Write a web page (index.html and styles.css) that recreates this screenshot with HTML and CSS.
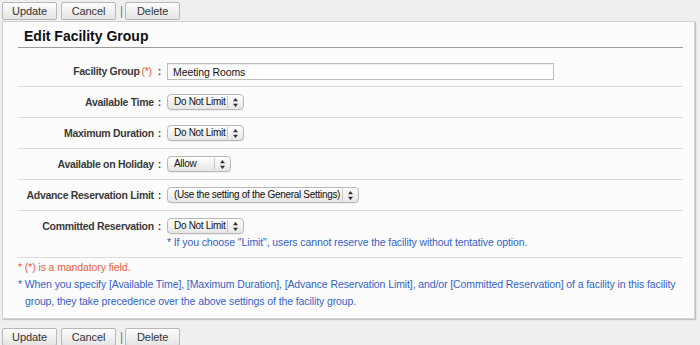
FILE: index.html
```html
<!DOCTYPE html>
<html lang="en">

<head>
    <meta charset="UTF-8">
    <meta name="viewport" content="width=device-width, initial-scale=1.0">
    <title>Edit Facility Group</title>
    <link rel="stylesheet" href="styles.css">
</head>

<body>
    <div class="actions">
        <button class="btn">Update</button>
        <button class="btn">Cancel</button>
        <span class="bar">|</span>
        <button class="btn">Delete</button>
    </div>

    <div class="panel">
        <h2 class="panel-title">Edit Facility Group</h2>

        <div class="form-row first">
            <label class="form-label" for="group">Facility Group<span class="req">(*)</span><span class="colon">:</span></label>
            <div class="form-value">
                <input type="text" id="group" class="text-input" value="Meeting Rooms">
            </div>
        </div>

        <div class="form-row">
            <label class="form-label">Available Time<span class="colon">:</span></label>
            <div class="form-value">
                <span class="sel w-limit">
                    <select><option>Do Not Limit</option></select>
                    <svg class="arrows" width="5" height="9" viewBox="0 0 5 9"><path d="M2.5 0L5 3.2H0Z M0 5.8H5L2.5 9Z" fill="#333"/></svg>
                </span>
            </div>
        </div>

        <div class="form-row">
            <label class="form-label">Maximum Duration<span class="colon">:</span></label>
            <div class="form-value">
                <span class="sel w-limit">
                    <select><option>Do Not Limit</option></select>
                    <svg class="arrows" width="5" height="9" viewBox="0 0 5 9"><path d="M2.5 0L5 3.2H0Z M0 5.8H5L2.5 9Z" fill="#333"/></svg>
                </span>
            </div>
        </div>

        <div class="form-row">
            <label class="form-label">Available on Holiday<span class="colon">:</span></label>
            <div class="form-value">
                <span class="sel w-allow">
                    <select><option>Allow</option></select>
                    <svg class="arrows" width="5" height="9" viewBox="0 0 5 9"><path d="M2.5 0L5 3.2H0Z M0 5.8H5L2.5 9Z" fill="#333"/></svg>
                </span>
            </div>
        </div>

        <div class="form-row">
            <label class="form-label">Advance Reservation Limit<span class="colon">:</span></label>
            <div class="form-value">
                <span class="sel w-general">
                    <select><option>(Use the setting of the General Settings)</option></select>
                    <svg class="arrows" width="5" height="9" viewBox="0 0 5 9"><path d="M2.5 0L5 3.2H0Z M0 5.8H5L2.5 9Z" fill="#333"/></svg>
                </span>
            </div>
        </div>

        <div class="form-row">
            <label class="form-label">Committed Reservation<span class="colon">:</span></label>
            <div class="form-value">
                <span class="sel w-limit">
                    <select><option>Do Not Limit</option></select>
                    <svg class="arrows" width="5" height="9" viewBox="0 0 5 9"><path d="M2.5 0L5 3.2H0Z M0 5.8H5L2.5 9Z" fill="#333"/></svg>
                </span>
                <div class="hint">* If you choose "Limit", users cannot reserve the facility without tentative option.</div>
            </div>
        </div>

        <div class="notes">
            <p class="note note-req">* (*) is a mandatory field.</p>
            <p class="note">* When you specify [Available Time], [Maximum Duration], [Advance Reservation Limit], and/or [Committed Reservation] of a facility in this facility group, they take precedence over the above settings of the facility group.</p>
        </div>
    </div>

    <div class="actions bottom">
        <button class="btn">Update</button>
        <button class="btn">Cancel</button>
        <span class="bar">|</span>
        <button class="btn">Delete</button>
    </div>
</body>

</html>
```

FILE: styles.css
```css
body {
    margin: 0;
    padding: 0;
    background-color: #efefef;
    font-family: "Liberation Sans", Arial, sans-serif;
    font-size: 10.5px;
    color: #333;
}

.actions {
    display: flex;
    align-items: center;
    padding: 2px 2px 0;
    height: 18px;
}

.actions.bottom {
    margin-top: 7px;
}

.btn {
    width: 55px;
    height: 18px;
    margin-right: 4px;
    padding: 0;
    border: 1px solid #b8b8b8;
    border-radius: 2px;
    background: linear-gradient(#fdfdfd, #e4e4e4);
    font-family: "Liberation Sans", Arial, sans-serif;
    font-size: 11px;
    letter-spacing: -0.1px;
    color: #333;
    cursor: pointer;
}

.bar {
    color: #777;
    margin: 0 2px 0 0;
    font-size: 12px;
}

.panel {
    margin: 1px 5px 0 2px;
    padding: 0 11px 8px 15px;
    background-color: #fcfcfc;
    border: 1px solid #d2d2d2;
    box-shadow: 1px 1px 1px rgba(0, 0, 0, 0.18);
}

.panel-title {
    margin: 0;
    padding: 7px 0 3px 6px;
    font-size: 14px;
    font-weight: bold;
    color: #111;
    border-bottom: 1px solid #999;
    line-height: 15px;
}

.form-row {
    display: flex;
    align-items: flex-start;
    padding: 7px 0;
    border-bottom: 1px solid #dcdcdc;
}

.form-row.first {
    padding-top: 15px;
    padding-bottom: 6px;
}

.form-label {
    width: 143px;
    flex-shrink: 0;
    text-align: right;
    padding-right: 6px;
    font-weight: bold;
    color: #3a3a3a;
    line-height: 16px;
    letter-spacing: -0.3px;
    white-space: nowrap;
}

.first .form-label {
    line-height: 17px;
}

.colon {
    margin-left: 4px;
}

.req {
    color: #e8603a;
    font-weight: normal;
    margin-left: 2px;
}

.req + .colon {
    margin-left: 6px;
}

.form-value {
    flex: 1;
    display: flex;
    flex-direction: column;
    align-items: flex-start;
}

.text-input {
    display: block;
    box-sizing: border-box;
    width: 387px;
    height: 17px;
    margin: 0;
    padding: 0 5px;
    border: 1px solid #bdbdbd;
    box-shadow: inset 0 1px 1px rgba(0, 0, 0, 0.08);
    background: #fff;
    font-family: "Liberation Sans", Arial, sans-serif;
    font-size: 10.5px;
    letter-spacing: -0.1px;
    color: #111;
}

.sel {
    position: relative;
    display: block;
    height: 16px;
}

.sel select {
    appearance: none;
    -webkit-appearance: none;
    box-sizing: border-box;
    width: 100%;
    height: 16px;
    margin: 0;
    padding: 0 17px 0 6px;
    border: 1px solid #b8b8b8;
    border-radius: 4px;
    background: linear-gradient(#ffffff, #e6e6e6);
    box-shadow: 0 1px 0 rgba(0, 0, 0, 0.06);
    font-family: "Liberation Sans", Arial, sans-serif;
    font-size: 10px;
    letter-spacing: -0.3px;
    color: #111;
    line-height: 14px;
    text-overflow: clip;
}

.sel::after {
    content: "";
    position: absolute;
    top: 2px;
    bottom: 2px;
    right: 16px;
    border-left: 1px solid #c9c9c9;
}

.arrows {
    position: absolute;
    right: 6px;
    top: 4px;
    pointer-events: none;
}

.w-limit {
    width: 77px;
}

.w-allow {
    width: 64px;
}

.w-general {
    width: 192px;
}

.hint {
    margin-top: 1px;
    color: #3462c4;
    line-height: 15px;
    letter-spacing: -0.1px;
}

.notes {
    padding-top: 1px;
}

.note {
    margin: 0;
    padding-left: 7px;
    text-indent: -7px;
    line-height: 17px;
    color: #3462c4;
    letter-spacing: -0.1px;
}

.note-req {
    color: #e8603a;
}
```
